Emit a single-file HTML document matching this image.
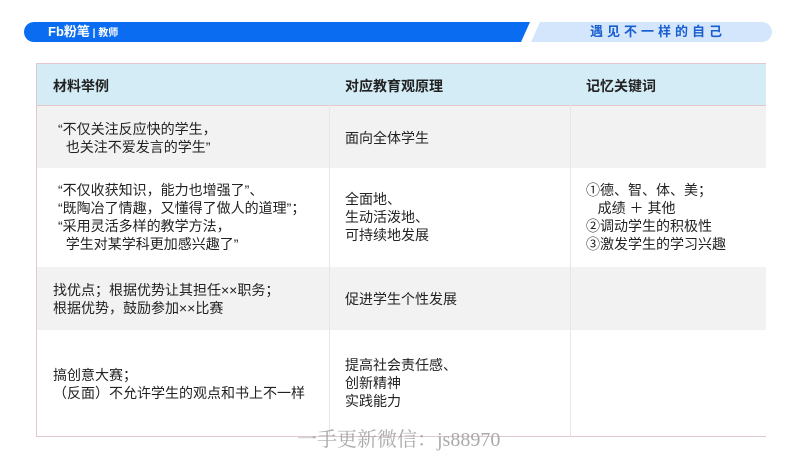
<!DOCTYPE html>
<html><head><meta charset="utf-8"><style>
*{margin:0;padding:0;box-sizing:border-box}
body{width:800px;height:450px;background:#fff;position:relative;overflow:hidden;font-family:"Liberation Sans","Noto Sans CJK SC",sans-serif;color:#222}
.abs{position:absolute}
.t{font-size:14px;line-height:18px;position:absolute;white-space:nowrap}
.b{font-weight:bold}
</style></head><body>
<svg class="abs" style="left:0;top:0" width="800" height="50">
<path d="M34 22 H530 L521 42 H34 A10 10 0 0 1 34 22Z" fill="#0a6cf0"/>
<path d="M540 22 H762 A10 10 0 0 1 762 42 H531Z" fill="#d4e6fb"/>
</svg>
<div class="abs b" style="left:48px;top:24px;color:#fff;font-size:13px;line-height:16px">Fb粉笔<span style="font-size:10px;font-weight:bold"> | 教师</span></div>
<div class="abs b" style="left:590px;top:24px;color:#1a5fd0;font-size:13px;letter-spacing:4px;line-height:16px">遇见不一样的自己</div>

<div class="abs" style="left:36px;top:63px;width:730px;height:374px;border:1px solid #e2c8cc;border-right:none"></div>
<div class="abs" style="left:37px;top:64px;width:729px;height:41px;background:#d3ecf6"></div>
<div class="abs" style="left:37px;top:105px;width:729px;height:63px;background:#f2f2f2"></div>
<div class="abs" style="left:37px;top:267px;width:729px;height:63px;background:#f2f2f2"></div>
<div class="abs" style="left:37px;top:105px;width:729px;height:1px;background:#e2c8cc"></div>
<div class="abs" style="left:329px;top:105px;width:1px;height:332px;background:#e6e6e6"></div>
<div class="abs" style="left:570px;top:105px;width:1px;height:332px;background:#e6e6e6"></div>

<div class="t b" style="left:53px;top:77px">材料举例</div>
<div class="t b" style="left:345px;top:77px">对应教育观原理</div>
<div class="t b" style="left:586px;top:77px">记忆关键词</div>

<div class="t" style="left:58px;top:120px">“不仅关注反应快的学生，<br>&nbsp;&nbsp;也关注不爱发言的学生”</div>
<div class="t" style="left:345px;top:129px">面向全体学生</div>

<div class="t" style="left:58px;top:181px">“不仅收获知识，能力也增强了”、<br>“既陶冶了情趣，又懂得了做人的道理”；<br>“采用灵活多样的教学方法，<br>&nbsp;&nbsp;学生对某学科更加感兴趣了”</div>
<div class="t" style="left:345px;top:190px">全面地、<br>生动活泼地、<br>可持续地发展</div>
<div class="t" style="left:586px;top:181px">①德、智、体、美；<br>&nbsp;&nbsp;&nbsp;成绩 ＋ 其他<br>②调动学生的积极性<br>③激发学生的学习兴趣</div>

<div class="t" style="left:53px;top:281px">找优点；根据优势让其担任××职务；<br>根据优势，鼓励参加××比赛</div>
<div class="t" style="left:345px;top:290px">促进学生个性发展</div>

<div class="t" style="left:53px;top:366px">搞创意大赛；<br>（反面）不允许学生的观点和书上不一样</div>
<div class="t" style="left:345px;top:356px">提高社会责任感、<br>创新精神<br>实践能力</div>

<div class="abs" style="left:297px;top:428px;font-family:'Liberation Serif','Noto Serif CJK SC',serif;font-size:20px;color:#aaa;line-height:24px;white-space:nowrap">一手更新微信：js88970</div>
</body></html>
